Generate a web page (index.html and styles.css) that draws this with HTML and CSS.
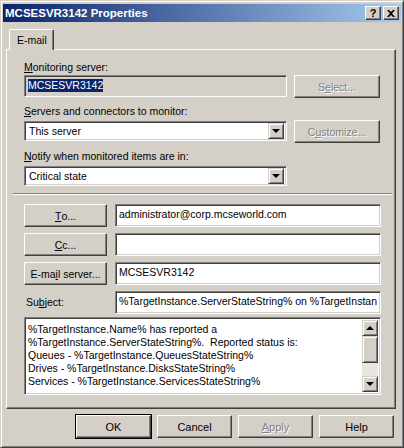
FILE: index.html
```html
<!DOCTYPE html>
<html lang="en">
<head>
  <meta charset="UTF-8" />
  <title>MCSESVR3142 Properties</title>
  <link rel="stylesheet" href="styles.css">
</head>
<body>

  <div class="window">
    <!-- Title bar -->
    <div class="titlebar">
      <span class="title">MCSESVR3142 Properties</span>
      <div class="title-btns">
        <span class="tbtn">?</span>
        <span class="tbtn">
          <svg width="8" height="7" viewBox="0 0 8 7">
            <path d="M0 0h2l2 2 2-2h2L5 3.5 8 7H6L4 5 2 7H0l3-3.5z" fill="#000"/>
          </svg>
        </span>
      </div>
    </div>

    <!-- Tabs -->
    <div class="tabs">
      <div class="tab">E-mail</div>
    </div>

    <div class="panel">
      <div class="label first"><u>M</u>onitoring server:</div>
      <div class="row">
        <div class="field readonly wide"><span class="sel">MCSESVR3142</span></div>
        <div class="btn disabled side">S<u>e</u>lect...</div>
      </div>

      <div class="label"><u>S</u>ervers and connectors to monitor:</div>
      <div class="row">
        <div class="combo wide">
          <span>This server</span>
          <span class="arrow"><i class="tri-down"></i></span>
        </div>
        <div class="btn disabled side">C<u>u</u>stomize...</div>
      </div>

      <div class="label"><u>N</u>otify when monitored items are in:</div>
      <div class="row">
        <div class="combo wide">
          <span>Critical state</span>
          <span class="arrow"><i class="tri-down"></i></span>
        </div>
      </div>

      <div class="separator"></div>

      <div class="mail-row">
        <div class="btn left"><u>T</u>o...</div>
        <div class="field fill">administrator@corp.mcseworld.com</div>
      </div>
      <div class="mail-row">
        <div class="btn left"><u>C</u>c...</div>
        <div class="field fill"></div>
      </div>
      <div class="mail-row">
        <div class="btn left">E-ma<u>i</u>l server...</div>
        <div class="field fill">MCSESVR3142</div>
      </div>
      <div class="mail-row">
        <div class="left subject">Su<u>b</u>ject:</div>
        <div class="field fill">%TargetInstance.ServerStateString% on %TargetInstan</div>
      </div>

      <div class="memo">
        <div class="memo-text">
          %TargetInstance.Name% has reported a<br>
          %TargetInstance.ServerStateString%.&nbsp; Reported status is:<br>
          Queues - %TargetInstance.QueuesStateString%<br>
          Drives - %TargetInstance.DisksStateString%<br>
          Services - %TargetInstance.ServicesStateString%
        </div>
        <div class="scrollbar">
          <span class="sbtn"><i class="tri-up"></i></span>
          <span class="thumb"></span>
          <span class="track"></span>
          <span class="sbtn"><i class="tri-down"></i></span>
        </div>
      </div>
    </div>

    <!-- Dialog buttons -->
    <div class="footer">
      <div class="btn dlg default">OK</div>
      <div class="btn dlg">Cancel</div>
      <div class="btn dlg disabled"><u>A</u>pply</div>
      <div class="btn dlg">Help</div>
    </div>
  </div>

</body>
</html>
```

FILE: styles.css
```css
* {
  margin: 0; padding: 0;
  box-sizing: border-box;
}

body {
  width: 404px;
  height: 448px;
  background: #d4d0c8;
  font-family: 'Liberation Sans', Arial, sans-serif;
  font-size: 10.5px;
  color: #000;
  overflow: hidden;
}

u {
  text-decoration: underline;
  text-underline-offset: 1px;
}

.window {
  width: 404px;
  height: 448px;
  background: #d4d0c8;
  border: 1px solid;
  border-color: #d4d0c8 #404040 #404040 #d4d0c8;
  box-shadow: inset 1px 1px 0 #fff, inset -1px -1px 0 #808080;
  padding: 3px 2px;
}

/* Title bar */
.titlebar {
  height: 18px;
  display: flex;
  align-items: center;
  justify-content: space-between;
  padding: 0 2px 0 2px;
  background: linear-gradient(to right, #0a246a, #a6caf0);
  color: #fff;
}

.title {
  font-weight: bold;
  font-size: 11.5px;
}

.title-btns {
  display: flex;
  gap: 2px;
}

.tbtn {
  width: 16px;
  height: 14px;
  display: flex;
  align-items: center;
  justify-content: center;
  background: #d4d0c8;
  color: #000;
  font-weight: bold;
  font-size: 11px;
  border: 1px solid;
  border-color: #fff #404040 #404040 #fff;
  box-shadow: inset -1px -1px 0 #808080;
}

/* Tabs */
.tabs {
  display: flex;
  padding: 7px 0 0 6px;
  height: 27px;
}

.tab {
  width: 45px;
  height: 21px;
  padding: 4px 0 0 7px;
  border: 1px solid;
  border-bottom: none;
  border-color: #fff #404040 transparent #fff;
  border-radius: 2px 2px 0 0;
  box-shadow: inset -1px 0 0 #808080;
  position: relative;
  z-index: 1;
  background: #d4d0c8;
}

.panel {
  width: 390px;
  height: 360px;
  margin-left: 3px;
  border: 1px solid;
  border-color: #fff #404040 #404040 #fff;
  box-shadow: inset -1px -1px 0 #808080;
  padding: 0 14px 0 17px;
}

.label {
  height: 13px;
  line-height: 13px;
  margin-top: 7px;
  margin-bottom: 2px;
}

.label.first {
  margin-top: 11px;
  margin-bottom: 1px;
}

.row {
  display: flex;
  align-items: flex-start;
  gap: 7px;
}

.field {
  height: 22px;
  line-height: 19px;
  padding: 0 3px;
  background: #fff;
  border: 1px solid;
  border-color: #808080 #fff #fff #808080;
  box-shadow: inset 1px 1px 0 #404040, inset -1px -1px 0 #d4d0c8;
  white-space: nowrap;
  overflow: hidden;
}

.field.readonly {
  background: #d4d0c8;
}

.wide {
  width: 263px;
}

.fill {
  flex: 1;
}

.sel {
  background: #0a246a;
  color: #fff;
  display: inline-block;
  line-height: 13px;
  margin-top: 3px;
}

.combo {
  height: 20px;
  margin-top: 1px;
  display: flex;
  align-items: center;
  justify-content: space-between;
  padding: 0 2px 0 4px;
  background: #fff;
  border: 1px solid;
  border-color: #808080 #fff #fff #808080;
  box-shadow: inset 1px 1px 0 #404040, inset -1px -1px 0 #d4d0c8;
}

.arrow {
  width: 16px;
  height: 16px;
  display: flex;
  align-items: center;
  justify-content: center;
  background: #d4d0c8;
  border: 1px solid;
  border-color: #d4d0c8 #404040 #404040 #d4d0c8;
  box-shadow: inset 1px 1px 0 #fff, inset -1px -1px 0 #808080;
}

.tri-down, .tri-up {
  width: 0;
  height: 0;
  border-left: 4px solid transparent;
  border-right: 4px solid transparent;
}

.tri-down {
  border-top: 4px solid #000;
}

.tri-up {
  border-bottom: 4px solid #000;
}

/* Buttons */
.btn {
  height: 23px;
  display: flex;
  align-items: center;
  justify-content: center;
  background: #d4d0c8;
  border: 1px solid;
  border-color: #fff #404040 #404040 #fff;
  box-shadow: inset -1px -1px 0 #808080;
  white-space: nowrap;
}

.btn.disabled {
  color: #808080;
  text-shadow: 1px 1px 0 #fff;
}

.side {
  width: 86px;
}

.separator {
  height: 2px;
  margin: 7px -11px 9px -11px;
  border-top: 1px solid #808080;
  border-bottom: 1px solid #fff;
}

.mail-row {
  display: flex;
  gap: 8px;
  margin-bottom: 6px;
}

.mail-row .left {
  width: 83px;
}

.mail-row .field {
  height: 23px;
}

.subject {
  line-height: 23px;
  padding-left: 2px;
}

/* Multiline text with scrollbar */
.memo {
  margin-top: -3px;
  height: 78px;
  display: flex;
  background: #fff;
  border: 1px solid;
  border-color: #808080 #fff #fff #808080;
  box-shadow: inset 1px 1px 0 #404040, inset -1px -1px 0 #d4d0c8;
  padding: 2px;
}

.memo-text {
  flex: 1;
  line-height: 13px;
  padding: 3px 0 0 1px;
  white-space: nowrap;
  overflow: hidden;
}

.scrollbar {
  width: 16px;
  display: flex;
  flex-direction: column;
}

.sbtn {
  height: 16px;
  display: flex;
  align-items: center;
  justify-content: center;
  background: #d4d0c8;
  border: 1px solid;
  border-color: #d4d0c8 #404040 #404040 #d4d0c8;
  box-shadow: inset 1px 1px 0 #fff, inset -1px -1px 0 #808080;
}

.thumb {
  height: 27px;
  background: #d4d0c8;
  border: 1px solid;
  border-color: #d4d0c8 #404040 #404040 #d4d0c8;
  box-shadow: inset 1px 1px 0 #fff, inset -1px -1px 0 #808080;
}

.track {
  flex: 1;
  background: #e8e6e2;
}

/* Footer buttons */
.footer {
  display: flex;
  justify-content: flex-end;
  gap: 6px;
  padding: 6px 7px 0 0;
}

.dlg {
  width: 75px;
  height: 23px;
  font-size: 11px;
}

.dlg.default {
  outline: 1px solid #000;
  outline-offset: 0;
}
```
